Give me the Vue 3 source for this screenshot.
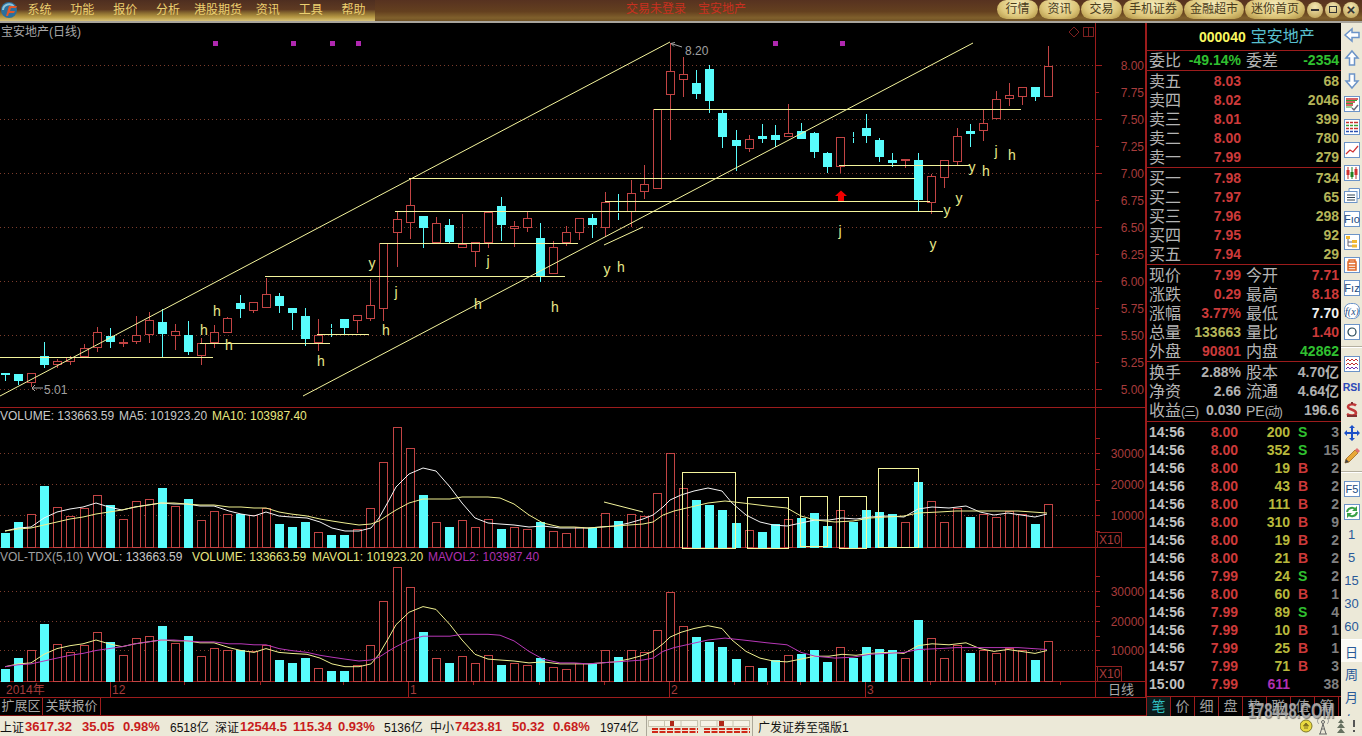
<script setup>
const menus = ['系统', '功能', '报价', '分析', '港股期货', '资讯', '工具', '帮助']
const navs = ['行情', '资讯', '交易', '手机证券', '金融超市', '迷你首页']

const barX = i => Math.round(5.3 + 13.04 * i)

// i, hi, top, bottom, lo, c = down day
const rawCandles = [
  [373, 373.3, 375, 381, 1], [374, 374.3, 381, 385, 1], [373, 373.3, 382.7, 387, 0], [342, 356, 365, 368, 1],
  [359, 361, 365, 368, 0], [356, 357.3, 361.7, 365, 0], [344, 348.3, 357.3, 357.3, 0], [327, 332.3, 347.7, 352, 0],
  [328, 336, 341.7, 348, 1], [339, 342.3, 344, 347, 0], [316, 335.3, 341.7, 344, 0], [312, 320, 335.3, 343, 0],
  [309, 322, 334, 357, 1], [324, 331, 336, 350, 0], [321, 335, 351.7, 355, 1], [338, 343.3, 356, 365, 0],
  [325, 332.3, 343.3, 348, 0], [317, 318.3, 332.7, 333, 0], [295, 303, 309, 318, 1], [302, 302.3, 311, 313, 0],
  [278, 294.3, 307.7, 308, 0], [293, 296, 306, 313, 1], [308, 308.3, 312.7, 330, 1], [308, 316, 339, 346, 1],
  [319, 335.3, 342.7, 351, 0], [324, 328, 329, 337, 1], [319, 319.3, 328, 334, 1], [315, 315.3, 321.3, 333, 0],
  [279, 305.3, 318.7, 321, 0], [243, 243, 308.7, 321, 0], [211, 219.3, 233, 267, 0], [178, 205, 222.7, 239, 0],
  [216, 216, 228, 248, 1], [217, 223.3, 242.7, 243, 0], [219, 225, 242, 243, 1], [214, 244.3, 247.7, 248, 0],
  [242, 242.3, 251.7, 267, 0], [212, 212, 242.7, 248, 0], [197, 206, 225, 241, 1], [221, 226.3, 228.7, 247, 0],
  [212, 218.3, 227.7, 232, 0], [223, 238.3, 276.7, 282, 1], [241, 247.3, 273.7, 274, 0], [226, 232.3, 243.3, 246, 0],
  [218, 218.3, 233.3, 240, 0], [214, 218.3, 225, 238, 1], [192, 201.7, 227.7, 237, 0], [194, 211.5, 212.5, 220, 1],
  [180, 192.7, 212.3, 227, 0], [165, 184.3, 191.7, 199, 0], [109, 109.3, 189.3, 189.3, 0], [43, 70.7, 95.3, 140, 0],
  [57, 74.3, 79.7, 97, 0], [70, 83, 94, 99, 1], [65, 69.3, 101, 113, 1], [110, 113.3, 137, 148, 1],
  [130, 140.3, 146, 171, 1], [135, 139.3, 148.7, 152, 0], [124, 136, 139, 143, 1], [125, 135.3, 140, 147, 1],
  [104, 132.7, 136.7, 137, 0], [123, 131.3, 139, 139, 1], [132, 133, 151.7, 158, 1], [152, 153, 167, 173, 1],
  [137, 137.3, 167.3, 173, 0], [132, 136.5, 137.5, 143, 1], [114, 128.3, 136, 143, 1], [138, 140, 157, 162, 1],
  [153, 160, 163, 167, 1], [159, 159.3, 161.3, 168, 0], [153, 160.3, 200, 211, 1], [174, 176.3, 202.7, 214, 0],
  [160, 160.3, 177.7, 188, 0], [128, 136.3, 161.7, 166, 0], [124, 131.3, 133.7, 147, 1], [110, 122.7, 131.3, 141, 0],
  [91, 99.3, 118.7, 119, 0], [83, 94.7, 99.3, 106, 0], [87, 87.3, 96.7, 105, 0], [87, 87.3, 96.7, 101, 1],
  [46, 66.3, 96.7, 97, 0]
]
const candles = rawCandles.map((c, i) => {
  const x = barX(i)
  const top = Math.round(c[1])
  const bot = Math.max(Math.round(c[2]), top + 1)
  return { x, hi: Math.round(c[0]), lo: Math.round(c[3]), top, bot, down: !!c[4] }
})

// top of every volume bar in the upper panel
const volTops = [533, 522, 514, 486, 507, 516, 508, 495, 505, 519, 501, 499, 488, 506, 499, 520, 511, 514, 514, 515, 508,
  524, 527, 522, 532, 535, 535, 529, 508, 462, 427, 448, 495, 522, 527, 520, 527, 519, 529, 527, 529, 522, 531,
  533, 527, 528, 513, 521, 514, 516, 493, 453, 488, 500, 505, 510, 523, 530, 532, 524, 519, 518, 513, 526, 510,
  522, 510, 512, 514, 522, 482, 501, 522, 508, 517, 514, 517, 511, 514, 524, 504]
const vol2Y = y => 682 - (547 - y) * 0.955
const volBars = volTops.map((t, i) => ({ x: barX(i), top: t, top2: Math.round(vol2Y(t)), down: candles[i].down }))

const ma5Pts = [[5, 531], [18, 528], [31, 527], [44, 518], [57, 512], [70, 509], [83, 507], [96, 503], [109, 507], [122, 510],
  [135, 507], [148, 505], [161, 503], [174, 504], [187, 504], [200, 506], [214, 506], [229, 511], [241, 514], [254, 516],
  [266, 512], [279, 516], [291, 517], [307, 518], [320, 522], [332, 528], [345, 531], [359, 531], [371, 528], [379, 518],
  [388, 502], [396, 487], [409, 474], [423, 468], [436, 471], [450, 487], [462, 503], [475, 518], [488, 523], [500, 524],
  [514, 525], [529, 527], [543, 526], [560, 528], [574, 528], [588, 528], [601, 527], [615, 526], [629, 523], [643, 519],
  [653, 515], [663, 507], [670, 500], [681, 495], [694, 491], [708, 488], [722, 491], [732, 503], [746, 515], [760, 522],
  [773, 525], [787, 526], [801, 523], [815, 520], [829, 520], [842, 518], [856, 519], [870, 517], [887, 516], [904, 517],
  [918, 509], [932, 507], [949, 508], [966, 506], [980, 512], [994, 515], [1008, 513], [1021, 515], [1035, 517], [1047, 514]]
const ma10Pts = [[5, 531], [18, 529], [31, 528], [44, 525], [57, 522], [70, 519], [83, 517], [96, 514], [109, 512], [122, 510],
  [135, 507], [148, 505], [161, 503], [174, 503], [187, 504], [200, 505], [214, 505], [229, 507], [241, 507], [254, 508],
  [266, 508], [279, 512], [291, 514], [307, 516], [320, 519], [332, 521], [345, 523], [359, 525], [371, 524], [379, 521],
  [388, 515], [396, 510], [409, 503], [423, 499], [436, 499], [450, 499], [462, 497], [475, 497], [488, 497], [500, 498],
  [514, 504], [529, 515], [543, 523], [560, 527], [574, 527], [588, 528], [601, 527], [615, 526], [629, 525], [643, 524],
  [653, 522], [663, 515], [674, 511], [691, 507], [708, 503], [725, 501], [743, 503], [767, 506], [787, 508], [801, 516],
  [815, 520], [835, 522], [853, 521], [870, 518], [887, 517], [904, 516], [918, 513], [939, 512], [956, 511], [973, 511],
  [994, 511], [1018, 511], [1047, 513]]
const pts = list => list.map(p => p.join(',')).join(' ')
const ma5Line = pts(ma5Pts)
const ma10Line = pts(ma10Pts)
const ma5Line2 = pts(ma5Pts.map(p => [p[0], vol2Y(p[1]).toFixed(1)]))
const ma10Line2 = pts(ma10Pts.map(p => [p[0], vol2Y(p[1]).toFixed(1)]))

// hand drawn study lines
const levels = [
  [0, 213, 357], [200, 330, 343], [317, 369, 334], [265, 565, 276], [380, 578, 243], [395, 943, 211],
  [409, 915, 178], [605, 930, 201], [654, 1021, 109], [839, 970, 165]
]
const marks = [
  ['y', 372, 264], ['j', 396, 293], ['h', 386, 331], ['h', 217, 312], ['h', 204, 331], ['h', 229, 346], ['h', 321, 362],
  ['j', 488, 262], ['y', 607, 270], ['h', 621, 268], ['h', 478, 305], ['h', 555, 308], ['j', 840, 232], ['y', 933, 245],
  ['y', 947, 211], ['y', 959, 199], ['y', 972, 168], ['h', 986, 172], ['j', 996, 152], ['h', 1012, 156]
]
const volBoxes = [[682, 472, 53, 76], [747, 497, 41, 51], [800, 496, 27, 50], [839, 496, 27, 52], [878, 468, 40, 79]]
const stars = [215, 293, 332, 358, 775, 842]

const priceGrid = [65, 119, 173, 227, 281, 335, 389]
const priceLabels = ['8.00', '7.75', '7.50', '7.25', '7.00', '6.75', '6.50', '6.25', '6.00', '5.75', '5.50', '5.25', '5.00']
  .map((t, i) => ({ t, y: 65 + i * 27 }))
const priceTicks = Array.from({ length: 13 }, (_, i) => 65 + i * 27)
const volTicks = [438, 453, 469, 484, 500, 515, 531]
const vol2Ticks = [576, 591, 606, 621, 636, 650, 666]
const dateTicks = [184, 260, 343, 473, 539, 604, 734, 767, 800, 930, 995, 1060]

const sells = [['卖五', '8.03', '68'], ['卖四', '8.02', '2046'], ['卖三', '8.01', '399'], ['卖二', '8.00', '780'], ['卖一', '7.99', '279']]
const buys = [['买一', '7.98', '734'], ['买二', '7.97', '65'], ['买三', '7.96', '298'], ['买四', '7.95', '92'], ['买五', '7.94', '29']]
const stats = [
  ['现价', '7.99', 'red', '今开', '7.71', 'red'],
  ['涨跌', '0.29', 'red', '最高', '8.18', 'red'],
  ['涨幅', '3.77%', 'red', '最低', '7.70', 'white'],
  ['总量', '133663', 'khaki', '量比', '1.40', 'red'],
  ['外盘', '90801', 'red', '内盘', '42862', 'green']
]
const infos = [
  ['换手', '2.88%', '股本', '4.70亿'],
  ['净资', '2.66', '流通', '4.64亿']
]
const ticks = [
  ['14:56', '8.00', '200', 'S', '3'], ['14:56', '8.00', '352', 'S', '15'], ['14:56', '8.00', '19', 'B', '2'],
  ['14:56', '8.00', '43', 'B', '2'], ['14:56', '8.00', '111', 'B', '2'], ['14:56', '8.00', '310', 'B', '9'],
  ['14:56', '8.00', '19', 'B', '2'], ['14:56', '8.00', '21', 'B', '2'], ['14:56', '7.99', '24', 'S', '2'],
  ['14:56', '8.00', '60', 'B', '1'], ['14:56', '7.99', '89', 'S', '4'], ['14:56', '7.99', '10', 'B', '1'],
  ['14:56', '7.99', '25', 'B', '1'], ['14:57', '7.99', '71', 'B', '3'], ['15:00', '7.99', '611', '', '38']
]
const tabs = ['笔', '价', '细', '盘', '势', '联', '值', '筹']

const market = [
  ['上证', 25, 'n'], ['3617.32', 57, 'v'], ['35.05', 41, 'v'], ['0.98%', 47, 'v'], ['6518亿', 45, 'n'],
  ['深证', 25, 'n'], ['12544.5', 53, 'v'], ['115.34', 45, 'v'], ['0.93%', 46, 'v'], ['5136亿', 46, 'n'],
  ['中小', 25, 'n'], ['7423.81', 57, 'v'], ['50.32', 41, 'v'], ['0.68%', 47, 'v'], ['1974亿', 46, 'n']
]
const periods = ['1', '5', '15', '30', '60']
</script>

<template>
  <div class="app">
    <header class="topbar">
      <div class="menubar">
        <svg class="logo" width="18" height="18" viewBox="0 0 18 18">
          <circle cx="9" cy="9" r="8" fill="#2c6f9c" />
          <path d="M3 9a6 6 0 0 1 11-3" fill="none" stroke="#8fc3d8" stroke-width="2" />
          <path d="M6 15L9 5h8l-1 2h-5l-1 3h5l-1 2h-5l-1 3z" fill="#e2582a" />
        </svg>
        <span v-for="m in menus" :key="m" class="menu" :class="{ wide: m.length > 2 }">{{ m }}</span>
      </div>
      <div class="title"><span>交易未登录</span><span>宝安地产</span></div>
      <nav class="nav">
        <span v-for="n in navs" :key="n" class="pill" :class="{ long: n.length > 2 }">{{ n }}</span>
        <span class="winbtn"><b class="dash"></b></span>
        <span class="winbtn"><b class="sq"></b></span>
        <span class="winbtn x">×</span>
      </nav>
    </header>

    <div class="body">
      <section class="charts">
        <svg class="plot" width="1146" height="674" viewBox="0 23 1146 674">
          <!-- frame -->
          <g class="frame">
            <line x1="0" y1="407.5" x2="1146" y2="407.5" />
            <line x1="0" y1="547.5" x2="1146" y2="547.5" />
            <line x1="0" y1="681.5" x2="1146" y2="681.5" />
            <line x1="1095.5" y1="23" x2="1095.5" y2="697" />
            <line x1="1145.5" y1="23" x2="1145.5" y2="697" />
            <line x1="110.5" y1="682" x2="110.5" y2="697" />
            <line x1="408.5" y1="682" x2="408.5" y2="697" />
            <line x1="669.5" y1="682" x2="669.5" y2="697" />
            <line x1="865.5" y1="682" x2="865.5" y2="697" />
            <line v-for="t in priceTicks" :key="'pt' + t" x1="1096" :x2="t % 54 === 11 ? 1102 : 1099" :y1="t + 0.5" :y2="t + 0.5" />
            <line v-for="t in volTicks" :key="'vt' + t" x1="1096" x2="1100" :y1="t + 0.5" :y2="t + 0.5" />
            <line v-for="t in vol2Ticks" :key="'v2t' + t" x1="1096" x2="1100" :y1="t + 0.5" :y2="t + 0.5" />
            <line v-for="t in dateTicks" :key="'dt' + t" :x1="t + 0.5" :x2="t + 0.5" y1="682" y2="685" />
          </g>

          <!-- price panel -->
          <line v-for="y in priceGrid" :key="'g' + y" class="grid" x1="0" x2="1095" :y1="y + 0.5" :y2="y + 0.5" />
          <text class="t-title" x="1" y="36">宝安地产(日线)</text>
          <rect v-for="s in stars" :key="'s' + s" class="star" :x="s - 2" y="41" width="5" height="5" />
          <path class="axis-mark" d="M1074 27l5 5-5 5-5-5zM1083.500 27.500h10v9h-10zM1088.500 27.500v9" />

          <g v-for="(c, i) in candles" :key="'c' + i" :class="c.down ? 'cdown' : 'cup'">
            <line :x1="c.x + 0.5" :x2="c.x + 0.5" :y1="c.hi" :y2="c.top" />
            <line :x1="c.x + 0.5" :x2="c.x + 0.5" :y1="c.bot" :y2="c.lo" />
            <rect :x="c.x - 4 + 0.5" :y="c.top + 0.5" width="8" :height="Math.max(c.bot - c.top - 1, 0)" />
          </g>

          <g class="study">
            <line x1="0" y1="396" x2="670" y2="42" />
            <line x1="303" y1="396" x2="973" y2="43" />
            <line x1="604" y1="245" x2="643" y2="227" />
          </g>
          <g class="study flat">
            <line v-for="(l, i) in levels" :key="'l' + i" :x1="l[0]" :x2="l[1]" :y1="l[2] + 0.5" :y2="l[2] + 0.5" />
          </g>
          <text v-for="(m, i) in marks" :key="'m' + i" class="mark" :x="m[1]" :y="m[2] + 4" text-anchor="middle">{{ m[0] }}</text>
          <path d="M841 190.500l6 5.500h-3v5h-6v-5h-3z" fill="#f00000" />
          <path class="note-line" d="M682 47L671 43.500M675 42.500l-4 1 3 3M43 388H32M35 385l-3 3 3 3" />
          <text class="note" x="685" y="55">8.20</text>
          <text class="note" x="44" y="394">5.01</text>

          <text v-for="p in priceLabels" :key="p.t" class="axis" x="1144" :y="p.y + 5" text-anchor="end">{{ p.t }}</text>

          <!-- volume panel -->
          <text class="legend" y="420">
            <tspan x="0" fill="#c8c8c8">VOLUME: 133663.59</tspan>
            <tspan x="119" fill="#c8c8c8">MA5: 101923.20</tspan>
            <tspan x="212" fill="#e8e880">MA10: 103987.40</tspan>
          </text>
          <line v-for="y in [453, 484, 515]" :key="'vg' + y" class="grid" x1="0" x2="1095" :y1="y + 0.5" :y2="y + 0.5" />
          <text v-for="v in [[30000, 453], [20000, 484], [10000, 515]]" :key="'va' + v[0]" class="axis" x="1144" :y="v[1] + 5" text-anchor="end">{{ v[0] }}</text>
          <rect v-for="(b, i) in volBars" :key="'v' + i" :class="b.down ? 'bdown' : 'bup'" :x="b.x - 4 + 0.5" :y="b.top + 0.5" width="8" :height="547 - b.top" />
          <polyline class="ma-white" :points="ma5Line" />
          <polyline class="ma-yellow" :points="ma10Line" />
          <g class="study flat">
            <rect v-for="(b, i) in volBoxes" :key="'b' + i" :x="b[0] + 0.5" :y="b[1] + 0.5" :width="b[2]" :height="b[3]" fill="none" />
          </g>
          <line class="study" x1="604" y1="502" x2="643" y2="512" />
          <rect class="xbox" x="1097.500" y="532.500" width="24" height="15" />
          <text class="axis" x="1099" y="544">X10</text>

          <!-- second volume panel -->
          <text class="legend" y="561">
            <tspan x="0" fill="#a0a0a0">VOL-TDX(5,10)</tspan>
            <tspan x="87" fill="#c8c8c8">VVOL: 133663.59</tspan>
            <tspan x="192" fill="#e8e880">VOLUME: 133663.59</tspan>
            <tspan x="312" fill="#e8e880">MAVOL1: 101923.20</tspan>
            <tspan x="428" fill="#b030b0">MAVOL2: 103987.40</tspan>
          </text>
          <line v-for="y in [591, 621, 650]" :key="'wg' + y" class="grid" x1="0" x2="1095" :y1="y + 0.5" :y2="y + 0.5" />
          <text v-for="v in [[30000, 591], [20000, 621], [10000, 650]]" :key="'wa' + v[0]" class="axis" x="1144" :y="v[1] + 5" text-anchor="end">{{ v[0] }}</text>
          <rect v-for="(b, i) in volBars" :key="'w' + i" :class="b.down ? 'bdown' : 'bup'" :x="b.x - 4 + 0.5" :y="b.top2 + 0.5" width="8" :height="681 - b.top2" />
          <polyline class="ma-yellow" :points="ma5Line2" />
          <polyline class="ma-purple" :points="ma10Line2" />
          <rect class="xbox" x="1097.500" y="666.500" width="24" height="15" />
          <text class="axis" x="1099" y="678">X10</text>

          <!-- dates -->
          <text class="axis" x="6" y="694">2014年</text>
          <text class="axis" x="112" y="694">12</text>
          <text class="axis" x="410" y="694">1</text>
          <text class="axis" x="671" y="694">2</text>
          <text class="axis" x="867" y="694">3</text>
          <text class="dayline" x="1121" y="694" text-anchor="middle">日线</text>
        </svg>
        <div class="ext">
          <span class="ext-tab first">扩展区</span>
          <span class="ext-tab">关联报价</span>
        </div>
      </section>

      <aside class="panel">
        <div class="head"><b>000040</b><span>宝安地产</span></div>
        <div class="block">
          <div class="row"><span class="lb">委比</span><b class="green">-49.14%</b><span class="lb2">委差</span><b class="green">-2354</b></div>
        </div>
        <div class="block tall">
          <div v-for="r in sells" :key="r[0]" class="row"><span class="lb">{{ r[0] }}</span><b class="red">{{ r[1] }}</b><span></span><b class="khaki">{{ r[2] }}</b></div>
        </div>
        <div class="block tall">
          <div v-for="r in buys" :key="r[0]" class="row"><span class="lb">{{ r[0] }}</span><b class="red">{{ r[1] }}</b><span></span><b class="khaki">{{ r[2] }}</b></div>
        </div>
        <div class="block tall">
          <div v-for="r in stats" :key="r[0]" class="row">
            <span class="lb">{{ r[0] }}</span><b :class="r[2]">{{ r[1] }}</b>
            <span class="lb2">{{ r[3] }}</span><b :class="r[5]">{{ r[4] }}</b>
          </div>
        </div>
        <div class="block info">
          <div v-for="r in infos" :key="r[0]" class="row">
            <span class="lb">{{ r[0] }}</span><b class="gray">{{ r[1] }}</b>
            <span class="lb2">{{ r[2] }}</span><b class="gray">{{ r[3] }}</b>
          </div>
          <div class="row">
            <span class="lb">收益<small>(三)</small></span><b class="gray">0.030</b>
            <span class="lb2"><em>PE</em><small>(动)</small></span><b class="gray">196.6</b>
          </div>
        </div>
        <div class="ticks">
          <div v-for="(t, i) in ticks" :key="i" class="tick">
            <span class="time">{{ t[0] }}</span>
            <span class="red">{{ t[1] }}</span>
            <span :class="t[2] === '611' ? 'purple' : 'vol'">{{ t[2] }}</span>
            <span :class="t[3] === 'S' ? 'green' : 'red'">{{ t[3] }}</span>
            <span class="cnt">{{ t[4] }}</span>
          </div>
        </div>
        <div class="tabs">
          <span v-for="(t, i) in tabs" :key="t" class="tab" :class="{ on: i === 0 }">{{ t }}</span>
        </div>
      </aside>

      <div class="tools">
        <div class="tool"><svg width="18" height="18" viewBox="0 0 18 18"><path class="hollow" d="M2 9l7-6v3.500h7v5H9V15z" /></svg></div>
        <div class="tool"><svg width="18" height="18" viewBox="0 0 18 18"><path class="hollow" d="M9 2l6 7h-3.500v7h-5V9H3z" /></svg></div>
        <div class="tool"><svg width="18" height="18" viewBox="0 0 18 18"><path class="hollow" d="M9 16l6-7h-3.500V2h-5v7H3z" /></svg></div>
        <div class="tool"><svg width="18" height="18" viewBox="0 0 18 18"><rect class="card" x="1.500" y="1.500" width="15" height="15" /><path d="M3 4h12M3 7h9M3 10h7" stroke="#c83030" stroke-width="1.500" /><path d="M3 5.500h11M3 8.500h7M3 12h6" stroke="#38a038" /><path d="M9 13l2 2 4-5" fill="none" stroke="#667" stroke-width="1.500" /></svg></div>
        <div class="tool"><svg width="18" height="18" viewBox="0 0 18 18"><rect class="card" x="1.500" y="1.500" width="15" height="15" /><path d="M3 4.500h12M3 10.500h12" stroke="#c83030" stroke-width="1.500" /><path d="M3 7.500h12" stroke="#38a038" stroke-width="1.500" /><path d="M3 13.500h12" stroke="#2a50b0" stroke-width="1.500" /><path d="M6.500 3v12M10.500 3v12" stroke="#fff" /></svg></div>
        <div class="tool"><svg width="18" height="18" viewBox="0 0 18 18"><rect class="card" x="1.500" y="1.500" width="15" height="15" /><path d="M3 13l4-4 3 2 5-6" fill="none" stroke="#d03030" stroke-width="1.200" /></svg></div>
        <div class="tool"><svg width="18" height="18" viewBox="0 0 18 18"><rect class="card" x="1.500" y="1.500" width="15" height="15" /><path d="M5 3v12M13 3v12" stroke="#c03030" /><path d="M9 3v12" stroke="#208020" /><rect x="3.500" y="6" width="3" height="5" fill="#d03030" /><rect x="7.500" y="8" width="3" height="5" fill="#208020" /><rect x="11.500" y="5" width="3" height="6" fill="#d03030" /></svg></div>
        <div class="tool"><svg width="18" height="18" viewBox="0 0 18 18"><path class="outline" d="M6 4.500V1.500h10.500v10H14" /><rect class="card" x="1.500" y="4.500" width="12.500" height="11" /><path d="M4 8h8M4 10.500h8M4 13h8" stroke="#345" /></svg></div>
        <div class="tool"><svg width="18" height="18" viewBox="0 0 18 18"><rect class="card" x="1.500" y="1.500" width="15" height="15" /><text class="tool-f" x="9" y="13" text-anchor="middle">Fıo</text></svg></div>
        <div class="tool"><svg width="18" height="18" viewBox="0 0 18 18"><rect class="card" x="1.500" y="1.500" width="15" height="15" /><path d="M5 5v8h4M5 9h4" fill="none" stroke="#667" /><rect x="3" y="3" width="4" height="3" fill="#f0b830" /><rect x="9" y="7" width="5" height="3" fill="#f0b830" /><rect x="9" y="11.500" width="5" height="3" fill="#f0b830" /></svg></div>
        <div class="tool"><svg width="18" height="18" viewBox="0 0 18 18"><rect class="card" x="1.500" y="1.500" width="15" height="15" /><path d="M6 6V4h6v2M5 6h8v8H5zM5 9h8M5 11.500h8" fill="none" stroke="#e06828" stroke-width="1.500" /></svg></div>
        <div class="tool"><svg width="18" height="18" viewBox="0 0 18 18"><rect class="card" x="1.500" y="1.500" width="15" height="15" /><text class="tool-f" x="9" y="13" text-anchor="middle">Fız</text></svg></div>
        <div class="tool"><svg width="18" height="18" viewBox="0 0 18 18"><rect class="card round" x="1.500" y="1.500" width="15" height="15" rx="6" /><text class="tool-fx" x="9" y="13" text-anchor="middle">f(x)</text></svg></div>
        <div class="tool s19"><svg width="18" height="18" viewBox="0 0 18 18"><rect class="card" x="1.500" y="1.500" width="15" height="15" /><circle cx="9" cy="9" r="4" fill="none" stroke="#245" stroke-width="1.200" /></svg></div>
        <div class="sep s11"></div>
        <div class="tool"><svg width="18" height="18" viewBox="0 0 18 18"><rect class="card" x="1.500" y="1.500" width="15" height="15" /><path d="M3 6l2-2 2 2 2-2 2 2 2-2 2 2M3 10l2-2 2 2 2-2 2 2 2-2 2 2" fill="none" stroke="#c03030" /><path d="M3 14l2-2 2 2 2-2 2 2 2-2 2 2" fill="none" stroke="#7030b0" /></svg></div>
        <div class="tool"><b class="rsi">RSI</b></div>
        <div class="tool"><svg width="18" height="18" viewBox="0 0 18 18"><path d="M13 4.500C11 2.500 5 3 5 6c0 3 8 2 8 6 0 3-6 3-9 1" fill="none" stroke="#c03838" stroke-width="2.500" /><path d="M9 1v2M4 15h10" stroke="#803030" stroke-width="2" /></svg></div>
        <div class="tool"><svg width="18" height="18" viewBox="0 0 18 18"><path d="M9 1l3 3h-2v4h4V6l3 3-3 3v-2h-4v4h2l-3 3-3-3h2v-4H4v2L1 9l3-3v2h4V4H6z" fill="#1c50c8" /></svg></div>
        <div class="tool"><svg width="18" height="18" viewBox="0 0 18 18"><path d="M2 16l1-4L12 3l3 3-9 9z" fill="#e8a838" stroke="#a06820" stroke-width=".8" /><path d="M12 3l2-2 3 3-2 2z" fill="#e07070" /><path d="M2 16l1-4 3 3z" fill="#444" /></svg></div>
        <div class="sep s10"></div>
        <div class="tool"><svg width="18" height="18" viewBox="0 0 18 18"><rect class="card" x="1.500" y="1.500" width="15" height="15" /><text class="tool-f" x="9" y="13" text-anchor="middle">F5</text></svg></div>
        <div class="tool"><svg width="18" height="18" viewBox="0 0 18 18"><rect class="card" x="1.500" y="1.500" width="15" height="15" /><path d="M4 9a5 5 0 0 1 9-2M14 9a5 5 0 0 1-9 2" fill="none" stroke="#38a048" stroke-width="2" /><path d="M14 3v5h-5M4 15v-5h5" fill="#38a048" /></svg></div>
        <div v-for="p in periods" :key="p" class="tool per">{{ p }}</div>
        <div class="tool per day">日</div>
        <div class="tool per">周</div>
        <div class="tool per">月</div>
        <div class="tool per">年</div>
      </div>
    </div>

    <footer class="status">
      <span v-for="(m, i) in market" :key="i" class="cell" :class="m[2]" :style="{ width: m[1] + 'px' }">{{ m[0] }}</span>
      <svg class="meter" width="103" height="20" viewBox="0 0 103 20">
        <g fill="#f6f3e6" stroke="#c8c4b0">
          <rect x="0.500" y="4.500" width="49" height="6" /><rect x="52.500" y="4.500" width="49" height="6" />
        </g>
        <path d="M16.500 5v5M33 5v5M69 5v5M85 5v5" stroke="#c8c4b0" />
        <rect x="22" y="5" width="4" height="5" fill="#b02818" />
        <rect x="71" y="5" width="5" height="5" fill="#b02818" />
        <path d="M4 13h46M4 16h46M56 13h46M56 16h46" stroke="#d02818" stroke-width="2" stroke-dasharray="6 1.500" />
      </svg>
      <span class="firm">广发证券至强版1</span>
      <svg class="tray" width="60" height="20" viewBox="0 0 60 20">
        <circle cx="6" cy="10" r="6" fill="#e8d840" stroke="#807828" />
        <path d="M6 7l2.500 3h-5zM4 12h4" fill="#807020" stroke="#807020" />
        <path d="M23 8l-3 10M23 8l3 10M21 13h4M19 18h8" fill="none" stroke="#666" />
        <circle cx="23" cy="6" r="1.500" fill="none" stroke="#666" />
        <path d="M19 2c-2 2-2 4 0 6M27 2c2 2 2 4 0 6" fill="none" stroke="#999" />
        <path d="M41 3l3 4h-6zM41 7l4 5h-8zM41 12l4 5h-8z" fill="#667060" />
        <path d="M54 4v7M54 14v2" stroke="#555" stroke-width="2" />
      </svg>
    </footer>

    <div class="watermark">178448.COM</div>
  </div>
</template>

<style scoped>
.app {
  position: relative;
  width: 1362px;
  height: 736px;
  overflow: hidden;
  background: #000;
  display: flex;
  flex-direction: column;
  font-family: "Liberation Sans", "Noto Sans CJK SC", sans-serif;
}

/* top bar */
.topbar {
  height: 23px;
  display: flex;
  align-items: stretch;
  border-bottom: 2px solid #a8a49c;
  box-sizing: border-box;
  background: linear-gradient(#573220, #64401f 55%, #80602c 85%, #6f5124);
}
.menubar {
  width: 375px;
  display: flex;
  align-items: flex-start;
  background: linear-gradient(#4e2e20, #5e3a22 45%, #8a6c30 62%, #b89a44 82%, #d6c27a);
}
.logo {
  margin: 1px 0 0;
  flex: none;
}
.menu {
  width: 43px;
  margin-top: 2px;
  text-align: center;
  color: #ecd070;
  font-size: 12px;
  line-height: 16px;
}
.menu.wide {
  width: 57px;
}
.title {
  margin-left: 251px;
  width: 130px;
  display: flex;
  gap: 12px;
  color: #c83020;
  font-size: 12px;
  line-height: 18px;
}
.nav {
  margin-left: auto;
  display: flex;
  align-items: center;
  padding-right: 2px;
}
.pill {
  width: 41px;
  height: 19px;
  margin-right: 1px;
  margin-top: -2px;
  border-radius: 10px;
  background: radial-gradient(ellipse at 50% 25%, #f6ecbc, #dcc578 60%, #a88a3c);
  color: #4a3c1c;
  font-size: 12px;
  line-height: 19px;
  text-align: center;
}
.pill.long {
  width: 60px;
}
.winbtn {
  width: 16px;
  height: 16px;
  margin: -2px 1px 0;
  border-radius: 50%;
  background: radial-gradient(circle at 50% 30%, #f4e8b4, #b89a4c);
  color: #333;
  font-size: 15px;
  font-weight: bold;
  line-height: 15px;
  text-align: center;
  position: relative;
}
.dash {
  position: absolute;
  left: 4px;
  top: 7px;
  width: 8px;
  height: 2px;
  background: #333;
}
.sq {
  position: absolute;
  left: 4px;
  top: 4px;
  width: 8px;
  height: 7px;
  border: 1px solid #333;
  box-sizing: border-box;
}

.body {
  flex: 1;
  display: flex;
  min-height: 0;
}

/* charts */
.charts {
  width: 1146px;
  flex: none;
}
.plot {
  display: block;
}
.plot text {
  font-family: "Liberation Sans", "Noto Sans CJK SC", sans-serif;
}
.frame line {
  stroke: #9c1c1c;
  shape-rendering: crispEdges;
}
.grid {
  stroke: #7c3c2c;
  stroke-dasharray: 1 3;
  shape-rendering: crispEdges;
}
.t-title {
  fill: #a8a8a8;
  font-size: 12px;
}
.star {
  fill: #b028b0;
}
.axis-mark {
  fill: none;
  stroke: #7c2020;
  shape-rendering: crispEdges;
}
.cup line,
.cup rect {
  stroke: #c24444;
  shape-rendering: crispEdges;
}
.cup rect {
  fill: #000;
}
.cdown line {
  stroke: #58fcfc;
  shape-rendering: crispEdges;
}
.cdown rect {
  fill: #58fcfc;
  stroke: #58fcfc;
  shape-rendering: crispEdges;
}
.study line,
.study {
  stroke: #f4f49c;
  stroke-width: 1;
}
.flat line,
.flat rect {
  shape-rendering: crispEdges;
}
.flat rect {
  stroke: #f4f49c;
}
.mark {
  fill: #e8e88a;
  font-size: 14px;
}
.note-line {
  fill: none;
  stroke: #a8a8a8;
}
.note {
  fill: #a0a0a0;
  font-size: 12px;
}
.axis {
  fill: #a83c3c;
  font-size: 12px;
}
.legend {
  font-size: 12px;
}
.dayline {
  fill: #a8a8a8;
  font-size: 13px;
}
.bup {
  fill: #000;
  stroke: #c24444;
  shape-rendering: crispEdges;
}
.bdown {
  fill: #58fcfc;
  stroke: #58fcfc;
  shape-rendering: crispEdges;
}
.ma-white,
.ma-yellow,
.ma-purple {
  fill: none;
  stroke-width: 1;
}
.ma-white {
  stroke: #f4f4f4;
}
.ma-yellow {
  stroke: #f0f090;
}
.ma-purple {
  stroke: #b838b8;
}
.xbox {
  fill: none;
  stroke: #8c2020;
  shape-rendering: crispEdges;
}
.ext {
  height: 19px;
  box-sizing: border-box;
  display: flex;
  border-top: 1px solid #9c1c1c;
  border-bottom: 1px solid #7c1010;
}
.ext-tab {
  width: 57px;
  border-right: 1px solid #9c1c1c;
  color: #a8a8a8;
  font-size: 13px;
  line-height: 16px;
  text-align: center;
}
.ext-tab.first {
  width: 42px;
}

/* quote panel */
.panel {
  width: 195px;
  flex: none;
  box-sizing: border-box;
  border-left: 1px solid #9c1c1c;
  display: flex;
  flex-direction: column;
  overflow: hidden;
}
.head {
  height: 28px;
  box-sizing: border-box;
  border-bottom: 1px solid #9c1c1c;
  padding: 4px 0 0 52px;
  display: flex;
  gap: 5px;
  line-height: 20px;
}
.head b {
  color: #f8f860;
  font-size: 14px;
}
.head span {
  color: #58c0d0;
  font-size: 16px;
}
.block {
  border-bottom: 1px solid #9c1c1c;
}
.tall {
  padding-top: 1px;
}
.info {
  padding-top: 1px;
  padding-bottom: 1px;
}
.row {
  height: 19px;
  padding: 0 2px;
  display: grid;
  grid-template-columns: 32px 60px 37px 61px;
  line-height: 19px;
  white-space: nowrap;
}
.row b {
  font-size: 14px;
  text-align: right;
}
.lb,
.lb2 {
  color: #b4b4b4;
  font-size: 16px;
}
.lb2 {
  padding-left: 5px;
}
.lb small,
.lb2 small {
  font-size: 12px;
  letter-spacing: -1px;
}
.lb2 em {
  font-size: 14px;
  font-style: normal;
}
.ticks {
  flex: 1;
  padding: 1px 2px 0;
}
.tick {
  height: 18px;
  display: grid;
  grid-template-columns: 45px 44px 52px 20px 29px;
  font-size: 14px;
  font-weight: bold;
  line-height: 18px;
}
.tick span:nth-child(2),
.tick span:nth-child(3),
.tick span:nth-child(5) {
  text-align: right;
}
.tick span:nth-child(4) {
  padding-left: 8px;
}
.time {
  color: #c0c0c0;
}
.vol {
  color: #b8b83c;
}
.cnt {
  color: #808080;
}
.red {
  color: #cc3a3a;
}
.green {
  color: #30c030;
}
.khaki {
  color: #b4b458;
}
.white {
  color: #f0f0f0;
}
.gray {
  color: #b0b0b0;
}
.purple {
  color: #b030b0;
}
.tabs {
  height: 19px;
  flex: none;
  display: flex;
  border-top: 1px solid #9c1c1c;
}
.tab {
  width: 24px;
  box-sizing: border-box;
  border-right: 1px solid #9c1c1c;
  color: #a0a0a0;
  font-size: 14px;
  line-height: 18px;
  text-align: center;
}
.tab.on {
  color: #30c0c0;
  background: #0c1c1c;
}

/* right hand toolbar */
.tools {
  width: 21px;
  flex: none;
  overflow: hidden;
  background: #ece9d8;
}
.tool {
  height: 23px;
  display: flex;
  align-items: center;
  justify-content: center;
}
.tool.s19 {
  height: 19px;
}
.sep {
  display: flex;
  align-items: center;
}
.sep::after {
  content: "";
  width: 100%;
  border-top: 1px solid #b4b0a0;
  border-bottom: 1px solid #fff;
}
.sep.s11 {
  height: 11px;
}
.sep.s10 {
  height: 10px;
}
.hollow {
  fill: #fff;
  stroke: #6c94c8;
  stroke-width: 1.500;
}
.card {
  fill: #fff;
  stroke: #6c94c8;
}
.outline {
  fill: #fff;
  stroke: #6c94c8;
}
.tool-f {
  fill: #1c4a80;
  font-family: "Liberation Sans", sans-serif;
  font-size: 11px;
}
.tool-fx {
  fill: #1c4a80;
  font-family: "Liberation Serif", serif;
  font-size: 10px;
  font-style: italic;
}
.rsi {
  color: #2c48b8;
  font-family: "Liberation Sans", sans-serif;
  font-size: 10.500px;
}
.per {
  color: #2a5a98;
  font-size: 13px;
}
.per.day {
  background: #fbfaf4;
  border-top: 1px solid #fff;
  margin-top: 1px;
  height: 22px;
}

/* status bar */
.status {
  height: 20px;
  background: #ece9d8;
  display: flex;
  align-items: center;
  font-size: 13px;
  white-space: nowrap;
}
.cell {
  flex: none;
}
.cell.n {
  color: #111;
  font-size: 12px;
}
.cell.v {
  color: #c81c1c;
  font-weight: bold;
}
.meter {
  flex: none;
  border-left: 1px solid #aca899;
  border-right: 1px solid #aca899;
  padding: 0 1px;
}
.firm {
  margin-left: 5px;
  color: #111;
  font-size: 12px;
}
.tray {
  margin-left: auto;
  margin-right: 2px;
}
.watermark {
  position: absolute;
  left: 1248px;
  top: 698px;
  color: rgba(195, 195, 195, 0.8);
  font-size: 22px;
  font-weight: bold;
  line-height: 26px;
  white-space: nowrap;
  transform: scaleX(0.66);
  transform-origin: left center;
  text-shadow: 1px 1px 1px rgba(70, 70, 70, 0.7);
}
</style>
